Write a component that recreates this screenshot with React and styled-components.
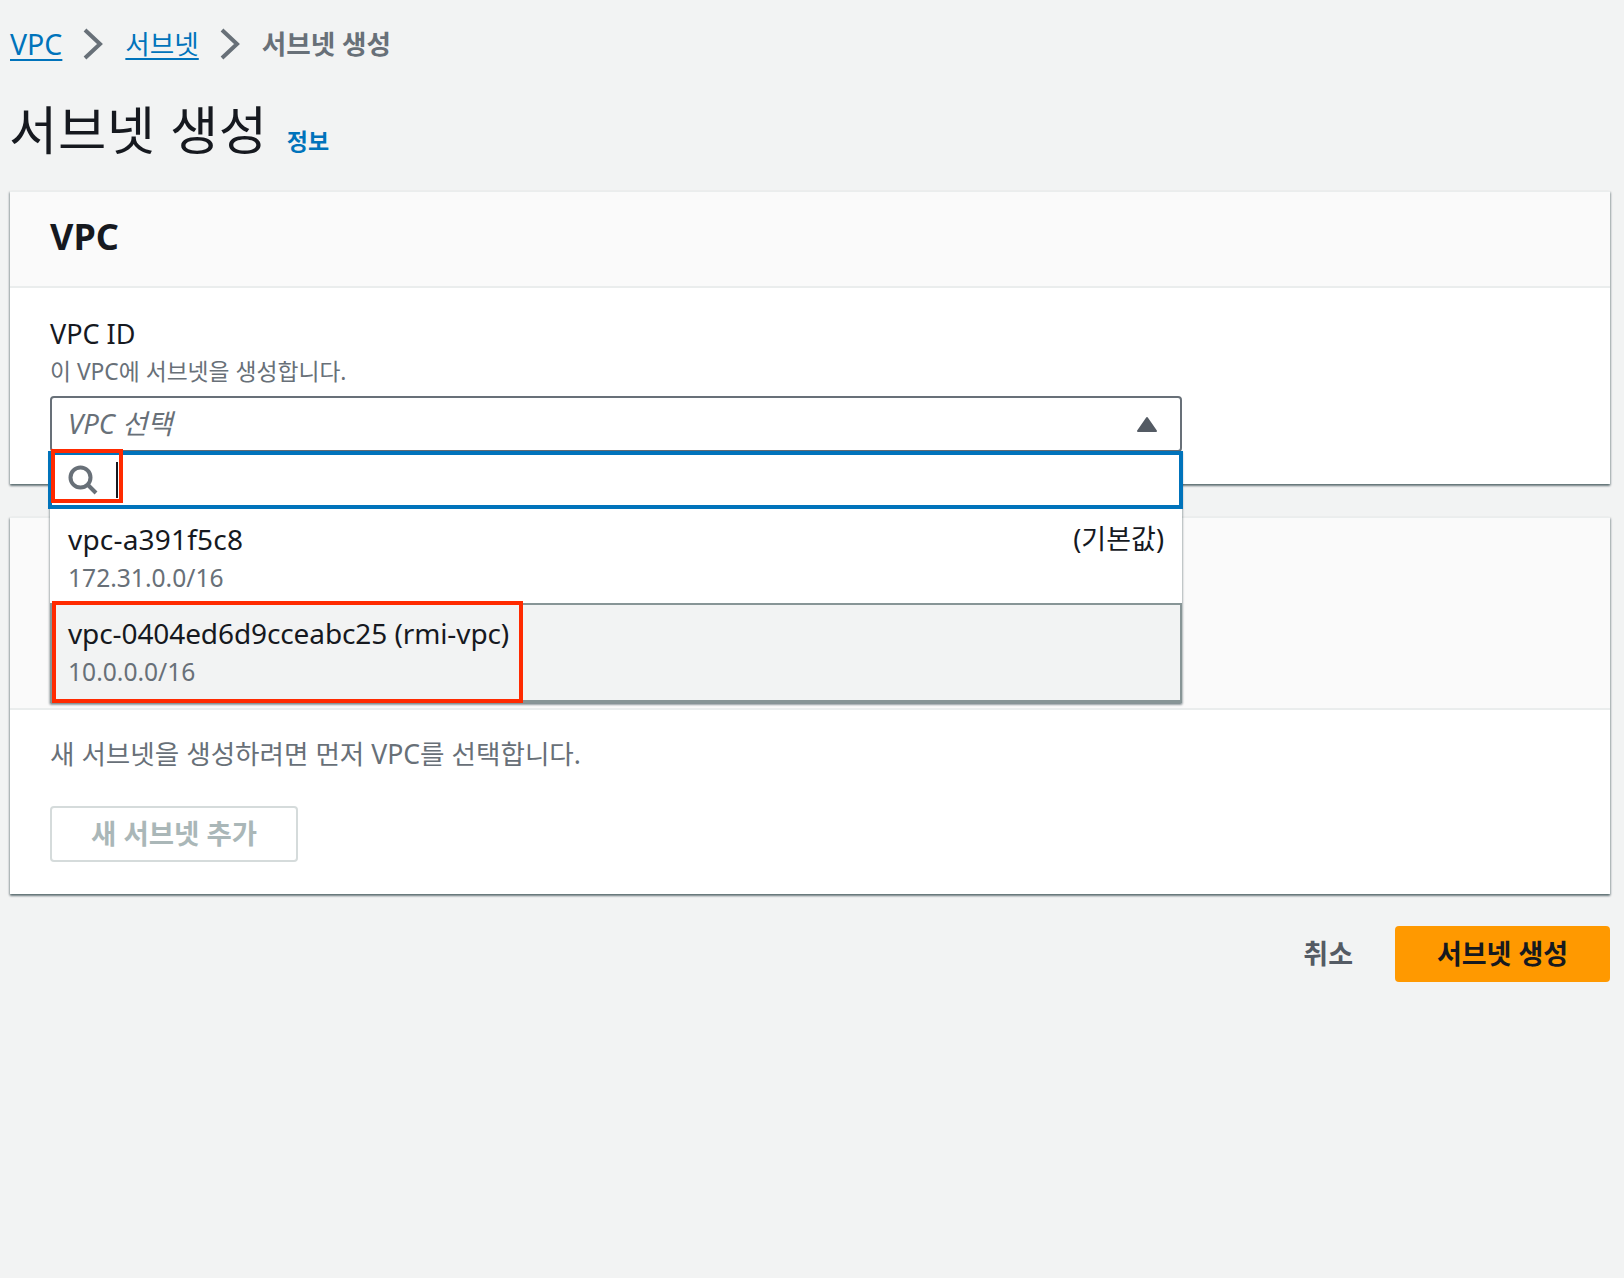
import React from "react";
import styled, { createGlobalStyle } from "styled-components";

const Global = createGlobalStyle`
  html, body { margin: 0; padding: 0; background: #f2f3f3; }
  body { font-family: "Noto Sans", "Noto Sans CJK KR", sans-serif; color: #16191f; }
  #root { min-height: 1278px; }
`;

const Page = styled.div`
  box-sizing: border-box;
  width: 1624px;
  height: 1278px;
  padding: 0 14px 0 10px;
  background: #f2f3f3;
`;

const Breadcrumbs = styled.nav`
  display: flex;
  align-items: center;
  height: 88px;
  font-size: 26.6px;
  line-height: 88px;
  white-space: nowrap;
`;

const CrumbLink = styled.a`
  color: #0073bb;
  font-size: ${(p) => p.$size || 26.6}px;
  text-decoration: underline;
  text-decoration-thickness: 2px;
  text-underline-offset: 4px;
`;

const CrumbCurrent = styled.span`
  color: #687078;
  font-weight: 700;
`;

const Chevron = styled.svg`
  width: 22px;
  height: 32px;
  margin: 0 21px 0 20px;
  fill: none;
  stroke: #687078;
  stroke-width: 4;
`;

const TitleRow = styled.div`
  display: flex;
  align-items: baseline;
  height: 103px;
  line-height: 84px;
`;

const Title = styled.h1`
  margin: 0 0 0 -1px;
  font-size: 52.5px;
  font-weight: 400;
  letter-spacing: 0.6px;
`;

const InfoLink = styled.a`
  margin-left: 19px;
  color: #0073bb;
  font-size: 23px;
  font-weight: 700;
`;

const Card = styled.section`
  position: relative;
  margin-bottom: ${(p) => p.$gap || 0}px;
  background: #fff;
  box-shadow: 0 2px 2px 0 rgba(0, 28, 36, 0.45), 1px 1px 2px 0 rgba(0, 28, 36, 0.2),
    -1px 1px 2px 0 rgba(0, 28, 36, 0.2);
`;

const CardHeader = styled.header`
  box-sizing: border-box;
  height: ${(p) => p.$height}px;
  padding: 0 40px;
  background: #fafafa;
  border-top: 1px solid #eaeded;
  border-bottom: 2px solid #eaeded;
`;

const CardHeading = styled.h2`
  margin: 0;
  font-size: 36px;
  font-weight: 700;
  line-height: 90px;
`;

const VpcBody = styled.div`
  box-sizing: border-box;
  height: 196px;
  padding: 29px 40px 0;
`;

const FieldLabel = styled.div`
  font-size: 27px;
  line-height: 34px;
`;

const FieldHint = styled.div`
  margin-top: 4px;
  color: #687078;
  font-size: 22.8px;
  line-height: 34px;
  height: 41px;
`;

const SelectWrap = styled.div`
  position: relative;
  width: 1132px;
`;

const SelectBox = styled.div`
  box-sizing: border-box;
  display: flex;
  align-items: center;
  justify-content: space-between;
  height: 56px;
  padding: 0 22px 0 16px;
  background: #fff;
  border: 2px solid #687078;
  border-radius: 4px;
`;

const Placeholder = styled.span`
  padding-bottom: 4px;
  color: #687078;
  font-size: 27.5px;
  font-style: italic;
`;

const Caret = styled.svg`
  width: 22px;
  height: 17px;
  fill: #545b64;
  stroke: #545b64;
  stroke-width: 2;
  stroke-linejoin: round;
`;

const Dropdown = styled.div`
  position: absolute;
  top: 55px;
  left: 0;
  width: 1132px;
  z-index: 2;
  background: #fff;
  box-shadow: 0 2px 2px 0 rgba(0, 28, 36, 0.3), 1px 1px 2px 0 rgba(0, 28, 36, 0.2),
    -1px 1px 2px 0 rgba(0, 28, 36, 0.2);
`;

const SearchBox = styled.div`
  box-sizing: border-box;
  display: flex;
  align-items: center;
  gap: 18px;
  width: 1135px;
  height: 58px;
  margin-left: -2px;
  padding: 0 0 0 16px;
  background: #fff;
  border: 4px solid #0073bb;
`;

const SearchIcon = styled.svg`
  width: 30px;
  height: 30px;
  fill: none;
  stroke: #687078;
  stroke-width: 4;
`;

const Cursor = styled.span`
  width: 2px;
  height: 36px;
  background: #16191f;
`;

const Option = styled.div`
  box-sizing: border-box;
  display: flex;
  justify-content: space-between;
  height: ${(p) => p.$height}px;
  padding: ${(p) => p.$top}px 18px 0 ${(p) => (p.$selected ? 16 : 18)}px;
  background: ${(p) => (p.$selected ? "#f2f3f3" : "#fff")};
  border: ${(p) => (p.$selected ? "2px solid #879596" : "none")};
  border-bottom-width: ${(p) => (p.$selected ? "3px" : "0")};
`;

const OptionName = styled.div`
  font-size: 28px;
  letter-spacing: ${(p) => p.$spacing}px;
  line-height: 38px;
`;

const OptionCidr = styled.div`
  margin-top: 1px;
  color: #687078;
  font-size: 24.6px;
  line-height: 38px;
`;

const Tag = styled.div`
  font-size: 27px;
  line-height: 38px;
`;

const Mark = styled.div`
  position: absolute;
  box-sizing: border-box;
  left: ${(p) => p.$x}px;
  top: ${(p) => p.$y}px;
  width: ${(p) => p.$w}px;
  height: ${(p) => p.$h}px;
  border: 4px solid #ff2a00;
  z-index: 3;
`;

const SubnetBody = styled.div`
  box-sizing: border-box;
  height: 184px;
  padding: 24px 40px 0;
`;

const Notice = styled.p`
  margin: 0;
  color: #687078;
  font-size: 26.6px;
  line-height: 40px;
`;

const DisabledButton = styled.button`
  display: block;
  box-sizing: border-box;
  width: 248px;
  height: 56px;
  margin-top: 32px;
  padding: 0 0 5px;
  background: #fff;
  border: 2px solid #d5dbdb;
  border-radius: 4px;
  color: #aab7b8;
  font-family: inherit;
  font-size: 27.5px;
  font-weight: 700;
`;

const Footer = styled.footer`
  display: flex;
  align-items: center;
  justify-content: flex-end;
  gap: 42px;
  margin-top: 32px;
`;

const CancelButton = styled.span`
  padding-bottom: 3px;
  color: #545b64;
  font-size: 27px;
  font-weight: 700;
`;

const PrimaryButton = styled.button`
  width: 215px;
  height: 56px;
  padding: 0 0 3px;
  background: #ff9900;
  border: none;
  border-radius: 4px;
  color: #16191f;
  font-family: inherit;
  font-size: 27px;
  font-weight: 700;
`;

const ChevronIcon = () => (
  <Chevron viewBox="0 0 22 32">
    <path d="M3 2 L18 16 L3 30" />
  </Chevron>
);

export default function App() {
  return (
    <Page>
      <Global />
      <Breadcrumbs>
        <CrumbLink $size={28.5}>VPC</CrumbLink>
        <ChevronIcon />
        <CrumbLink>서브넷</CrumbLink>
        <ChevronIcon />
        <CrumbCurrent>서브넷 생성</CrumbCurrent>
      </Breadcrumbs>
      <TitleRow>
        <Title>서브넷 생성</Title>
        <InfoLink>정보</InfoLink>
      </TitleRow>

      <Card $gap={33}>
        <CardHeader $height={97}>
          <CardHeading>VPC</CardHeading>
        </CardHeader>
        <VpcBody>
          <FieldLabel>VPC ID</FieldLabel>
          <FieldHint>이 VPC에 서브넷을 생성합니다.</FieldHint>
          <SelectWrap>
            <SelectBox>
              <Placeholder>VPC 선택</Placeholder>
              <Caret viewBox="0 0 22 17">
                <path d="M11 2 L20 15 L2 15 Z" />
              </Caret>
            </SelectBox>
            <Dropdown>
              <SearchBox>
                <SearchIcon viewBox="0 0 30 30">
                  <circle cx="12.5" cy="12.5" r="10" />
                  <path d="M19.5 19.5 L28 28" />
                </SearchIcon>
                <Cursor />
              </SearchBox>
              <Option $height={94} $top={11}>
                <div>
                  <OptionName $spacing={0.2}>vpc-a391f5c8</OptionName>
                  <OptionCidr>172.31.0.0/16</OptionCidr>
                </div>
                <Tag>(기본값)</Tag>
              </Option>
              <Option $selected $height={100} $top={9}>
                <div>
                  <OptionName $spacing={-0.1}>vpc-0404ed6d9cceabc25 (rmi-vpc)</OptionName>
                  <OptionCidr>10.0.0.0/16</OptionCidr>
                </div>
              </Option>
              <Mark $x={1} $y={-2} $w={72} $h={54} />
              <Mark $x={2} $y={150} $w={471} $h={102} />
            </Dropdown>
          </SelectWrap>
        </VpcBody>
      </Card>

      <Card>
        <CardHeader $height={193} />
        <SubnetBody>
          <Notice>새 서브넷을 생성하려면 먼저 VPC를 선택합니다.</Notice>
          <DisabledButton disabled>새 서브넷 추가</DisabledButton>
        </SubnetBody>
      </Card>

      <Footer>
        <CancelButton>취소</CancelButton>
        <PrimaryButton>서브넷 생성</PrimaryButton>
      </Footer>
    </Page>
  );
}
